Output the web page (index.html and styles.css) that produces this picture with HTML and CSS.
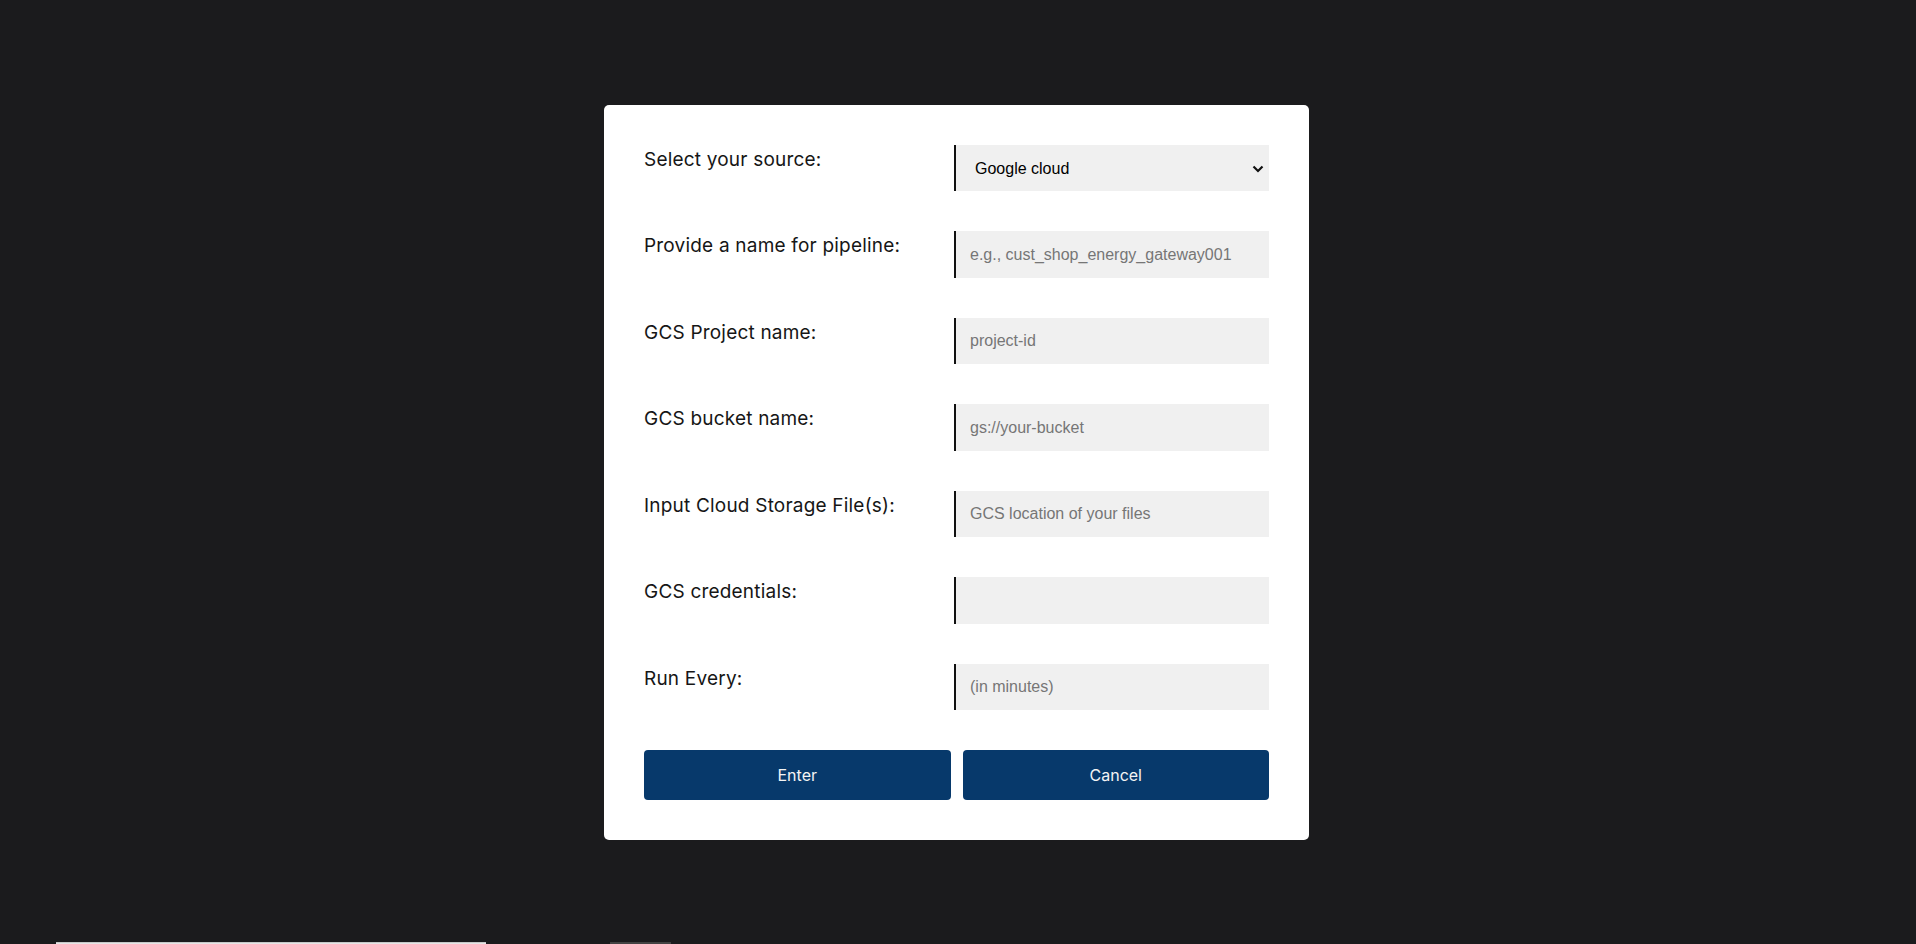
FILE: index.html
```html
<!DOCTYPE html>
<html lang="en">
<head>
<meta charset="utf-8">
<title>New pipeline</title>
<link rel="stylesheet" href="styles.css">
</head>
<body>
<div class="page">
  <div class="under">
    <div class="under-light"></div>
    <div class="under-dark"></div>
  </div>
</div>
<div class="overlay">
  <form class="modal">
    <div class="row">
      <label class="label" for="src">Select your source:</label>
      <div class="select-wrap">
        <select id="src" class="field select">
          <option>Google cloud</option>
        </select>
        <svg class="chev" width="12" height="8" viewBox="0 0 12 8"><path d="M1.5 1.5 L6 6 L10.5 1.5" fill="none" stroke="#111" stroke-width="2.2"/></svg>
      </div>
    </div>
    <div class="row">
      <label class="label" for="f1">Provide a name for pipeline:</label>
      <input id="f1" class="field" placeholder="e.g., cust_shop_energy_gateway001">
    </div>
    <div class="row">
      <label class="label" for="f2">GCS Project name:</label>
      <input id="f2" class="field" placeholder="project-id">
    </div>
    <div class="row">
      <label class="label" for="f3">GCS bucket name:</label>
      <input id="f3" class="field" placeholder="gs://your-bucket">
    </div>
    <div class="row">
      <label class="label" for="f4">Input Cloud Storage File(s):</label>
      <input id="f4" class="field" placeholder="GCS location of your files">
    </div>
    <div class="row">
      <label class="label" for="f5">GCS credentials:</label>
      <input id="f5" class="field" placeholder="">
    </div>
    <div class="row">
      <label class="label" for="f6">Run Every:</label>
      <input id="f6" class="field" placeholder="(in minutes)">
    </div>
    <div class="actions">
      <button type="button" class="btn">Enter</button>
      <button type="button" class="btn">Cancel</button>
    </div>
  </form>
</div>
</body>
</html>
```
FILE: styles.css
```css
* { box-sizing: border-box; }
html, body {
  margin: 0;
  padding: 0;
  height: 100%;
  overflow: hidden;
  background: #1b1b1d;
  font-family: Inter, "Liberation Sans", sans-serif;
}
.page {
  height: 944px;
  padding-top: 942px;
}
.under {
  display: flex;
  padding-left: 56px;
  gap: 124px;
}
.under-light {
  width: 430px;
  height: 40px;
  background: #e6e6e6;
  border-top: 1px solid #c8c8c8;
}
.under-dark {
  width: 61px;
  height: 40px;
  background: #434343;
}
.overlay {
  position: fixed;
  inset: 0;
  display: flex;
  align-items: center;
  justify-content: center;
}
.modal {
  width: 705px;
  background: #ffffff;
  border-radius: 5px;
  padding: 40px 40px 40px 40px;
  display: flex;
  flex-direction: column;
  gap: 40px;
  margin-left: -3px;
  margin-top: 1px;
}
.row {
  display: grid;
  grid-template-columns: 1fr 315px;
  align-items: start;
}
.label {
  font-family: Inter, "Liberation Sans", sans-serif;
  font-size: 19px;
  color: #161616;
  padding-top: 3px;
  letter-spacing: 0.2px;
}
.field {
  display: block;
  width: 100%;
  height: 46.5px;
  margin: 0;
  border: 0;
  border-left: 2px solid #111;
  border-radius: 0;
  background: #f0f0f0;
  padding: 0 14px;
  font-family: "Liberation Sans", Arial, sans-serif;
  font-size: 16px;
  color: #000;
  outline: none;
}
.field::placeholder {
  color: #767676;
}
.select-wrap {
  position: relative;
}
.select {
  -webkit-appearance: none;
  appearance: none;
  padding-left: 19px;
}
.chev {
  position: absolute;
  right: 5px;
  top: 20px;
  pointer-events: none;
}
.actions {
  display: grid;
  grid-template-columns: 1fr 1fr;
  gap: 12px;
}
.btn {
  height: 50px;
  border: 0;
  border-radius: 4px;
  background: #07396b;
  color: #f4f4f4;
  font-family: Inter, "Liberation Sans", sans-serif;
  font-size: 16px;
  cursor: pointer;
}
```
